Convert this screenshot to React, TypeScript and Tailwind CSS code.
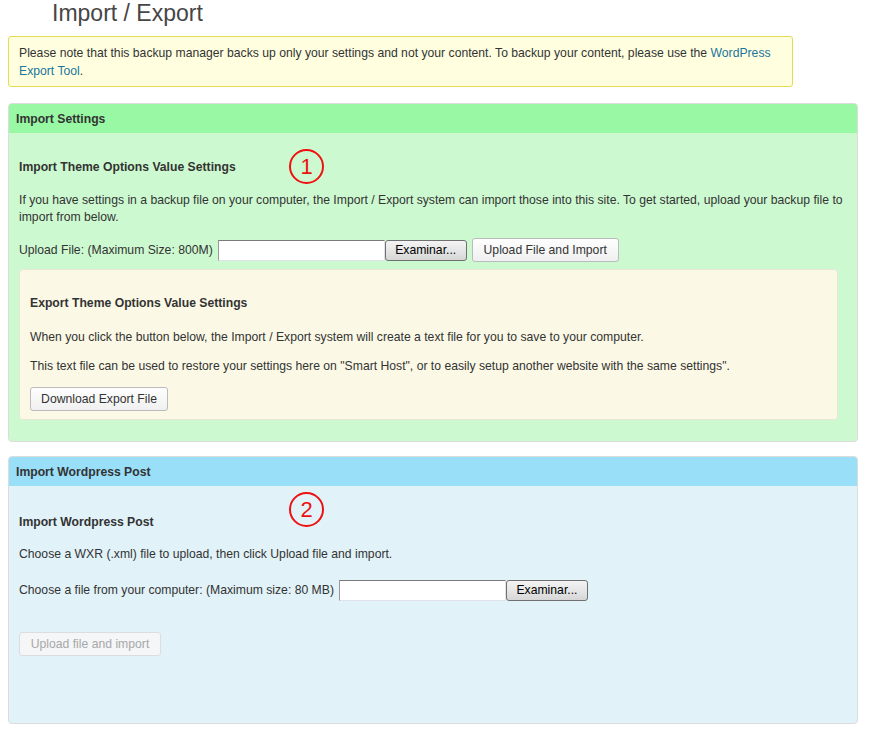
import React from "react";

const btn =
  "h-[24px] px-[10px] rounded-[3px] border border-[#bbbbbb] bg-gradient-to-b from-[#fefefe] to-[#f0f0f0] text-[12.2px] text-[#333] leading-none";
const winBtn =
  "h-[21px] w-[82px] rounded-[3px] border border-[#707070] bg-gradient-to-b from-[#f4f4f4] via-[#e6e6e6] to-[#d6d6d6] text-[12.2px] text-black leading-none";
const fileInput =
  "h-[21px] w-[167px] bg-white border border-[#e2e3ea] border-t-[#7a7a7a] border-l-[#9a9a9a]";

function Circle({ n }: { n: string }) {
  return (
    <div className="absolute w-[35px] h-[35px] rounded-full border-2 border-[#ee1111] flex items-center justify-center text-[#ee1111] text-[22px] leading-none">
      {n}
    </div>
  );
}

export default function App() {
  return (
    <div className="min-h-[755px] bg-white font-['Liberation_Sans',Arial,sans-serif] text-[12.2px] text-[#333] w-[872px]">
      <h1 className="pl-[52px] pt-[0px] text-[23px] leading-[27px] text-[#464646] font-normal">
        Import / Export
      </h1>

      <div className="mx-[8px] mt-[9px] w-[785px] rounded-[3px] border border-[#e6db55] bg-[#ffffe0] px-[10px] pt-[7px] pb-[6px] leading-[18px]">
        Please note that this backup manager backs up only your settings and not your content. To backup your content, please use the{" "}
        <span className="text-[#21759b]">WordPress</span>{" "}
        <span className="text-[#21759b]">Export Tool</span>.
      </div>

      {/* Import Settings */}
      <div className="relative mx-[8px] mt-[16px] w-[850px] rounded-[4px] border border-[#dcdcdc] bg-[#cdf9d0] overflow-hidden">
        <div className="h-[29px] bg-[#98f8a3] pl-[7px] pt-[1px] flex items-center font-bold">
          Import Settings
        </div>
        <div className="px-[10px] pt-[26px] pb-[21px]">
          <h3 className="font-bold leading-[16px]">Import Theme Options Value Settings</h3>
          <p className="mt-[17px] leading-[17px]">
            If you have settings in a backup file on your computer, the Import / Export system can import those into this site. To get started, upload your backup file to import from below.
          </p>
          <div className="mt-[12px] flex items-center h-[24px]">
            <span>Upload File: (Maximum Size: 800M)</span>
            <span className={fileInput + " ml-[5px]"} />
            <button className={winBtn}>Examinar...</button>
            <button className={btn + " ml-[5px] w-[147px]"}>Upload File and Import</button>
          </div>
          <div className="mt-[7px] mr-[9px] rounded-[4px] border border-[#e8e7d6] bg-[#fbf9e6] px-[10px] pt-[25px] pb-[8px]">
            <h3 className="font-bold leading-[16px]">Export Theme Options Value Settings</h3>
            <p className="mt-[18px] leading-[17px]">
              When you click the button below, the Import / Export system will create a text file for you to save to your computer.
            </p>
            <p className="mt-[12px] leading-[17px]">
              This text file can be used to restore your settings here on "Smart Host", or to easily setup another website with the same settings".
            </p>
            <button className={btn + " mt-[12px] w-[138px]"}>Download Export File</button>
          </div>
        </div>
        <div className="absolute left-[280px] top-[45px]">
          <Circle n="1" />
        </div>
      </div>

      {/* Import Wordpress Post */}
      <div className="relative mx-[8px] mt-[14px] w-[850px] rounded-[4px] border border-[#dcdcdc] bg-[#e1f2f9] overflow-hidden">
        <div className="h-[29px] bg-[#99dff8] pl-[7px] pt-[1px] flex items-center font-bold">
          Import Wordpress Post
        </div>
        <div className="px-[10px] pt-[28px] pb-[67px]">
          <h3 className="font-bold leading-[16px]">Import Wordpress Post</h3>
          <p className="mt-[16px] leading-[17px]">
            Choose a WXR (.xml) file to upload, then click Upload file and import.
          </p>
          <div className="mt-[16px] flex items-center h-[22px]">
            <span>Choose a file from your computer: (Maximum size: 80 MB)</span>
            <span className={fileInput + " ml-[5px]"} />
            <button className={winBtn}>Examinar...</button>
          </div>
          <button className="mt-[31px] h-[24px] w-[142px] rounded-[3px] border border-[#dddddd] bg-[#f4f6f7] text-[12.2px] text-[#a8a8a8] leading-none">
            Upload file and import
          </button>
        </div>
        <div className="absolute left-[280px] top-[35px]">
          <Circle n="2" />
        </div>
      </div>
    </div>
  );
}
